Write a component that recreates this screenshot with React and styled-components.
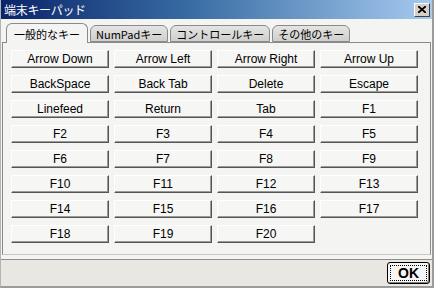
import React from 'react';
import styled, { createGlobalStyle } from 'styled-components';

const GlobalStyle = createGlobalStyle`
  html, body {
    margin: 0;
    padding: 0;
    background: #ffffff;
  }
  body {
    font-family: "Liberation Sans", Arial, sans-serif;
  }
`;

const Window = styled.div`
  width: 434px;
  height: 288px;
  box-sizing: border-box;
  display: flex;
  flex-direction: column;
  background: #e9e7e2;
  border-left: 1px solid #b4b4b4;
  border-right: 2px solid #9c9c9c;
  border-bottom: 2px solid #9c9c9c;
  overflow: hidden;
`;

const TitleBar = styled.div`
  height: 19px;
  flex: none;
  display: flex;
  align-items: center;
  justify-content: space-between;
  padding: 0 2px 0 3px;
  background: linear-gradient(to right, #0a246a 0%, #3a6ea5 45%, #a6caf0 100%);
`;

const Title = styled.span`
  color: #ffffff;
  font-family: "Noto Sans CJK JP", sans-serif;
  font-size: 12px;
  line-height: 19px;
  letter-spacing: -0.3px;
`;

const CloseButton = styled.div`
  width: 16px;
  height: 14px;
  box-sizing: border-box;
  display: flex;
  align-items: center;
  justify-content: center;
  background: #d4d0c8;
  border: 1px solid;
  border-color: #ffffff #404040 #404040 #ffffff;
`;

const Body = styled.div`
  flex: 1;
  display: flex;
  flex-direction: column;
  background: #f4f4f2;
  padding: 4px 0 4px 0;
`;

const TabStrip = styled.div`
  display: flex;
  align-items: flex-end;
  height: 19px;
  padding-left: 5px;
  position: relative;
  z-index: 1;
`;

const Tab = styled.div`
  box-sizing: border-box;
  height: ${p => (p.$active ? '20px' : '17px')};
  margin-bottom: ${p => (p.$active ? '-1px' : '0')};
  padding: 0 ${p => (p.$active ? '7px' : '5px')};
  margin-right: 2px;
  display: flex;
  align-items: center;
  border: 1px solid #8a8a8a;
  border-bottom: ${p => (p.$active ? 'none' : '1px solid #8a8a8a')};
  border-radius: 6px 6px 0 0;
  background: ${p => (p.$active ? '#f4f4f2' : 'linear-gradient(#e4e4e2, #cfcfcd)')};
  font-family: "Noto Sans CJK JP", "Liberation Sans", sans-serif;
  font-size: 11px;
  color: #000000;
  white-space: nowrap;
`;

const Panel = styled.div`
  flex: 1;
  margin: 0 1px 0 1px;
  border: 1px solid #8a8a8a;
  border-bottom-color: #c8c8c8;
  background: #f4f4f2;
  padding: 7px 12px 0 8px;
`;

const KeyGrid = styled.div`
  display: grid;
  grid-template-columns: repeat(4, 1fr);
  column-gap: 5px;
  row-gap: 7px;
`;

const KeyButton = styled.div`
  height: 18px;
  box-sizing: border-box;
  display: flex;
  align-items: center;
  justify-content: center;
  background: #f6f6f4;
  border: 1px solid;
  border-color: #ffffff #555555 #555555 #ffffff;
  box-shadow: inset -1px -1px 0 #9a9a9a;
  font-size: 12px;
  color: #000000;
  white-space: nowrap;
`;

const Footer = styled.div`
  height: 26px;
  flex: none;
  display: flex;
  align-items: center;
  justify-content: flex-end;
  padding-right: 2px;
  border-top: 1px solid #8c8c8c;
  background: #e9e7e2;
`;

const OkButton = styled.div`
  width: 43px;
  height: 22px;
  box-sizing: border-box;
  display: flex;
  align-items: center;
  justify-content: center;
  border: 1px solid #000000;
  border-radius: 3px;
  background: #f6f6f4;
  box-shadow: inset -1px -1px 0 #808080;
  padding: 2px;
`;

const OkFocus = styled.div`
  flex: 1;
  align-self: stretch;
  display: flex;
  align-items: center;
  justify-content: center;
  border: 1px dotted #000000;
  font-family: "Liberation Sans", Arial, sans-serif;
  font-weight: bold;
  font-size: 14px;
`;

const tabs = ['一般的なキー', 'NumPadキー', 'コントロールキー', 'その他のキー'];

const keys = [
  'Arrow Down', 'Arrow Left', 'Arrow Right', 'Arrow Up',
  'BackSpace', 'Back Tab', 'Delete', 'Escape',
  'Linefeed', 'Return', 'Tab', 'F1',
  'F2', 'F3', 'F4', 'F5',
  'F6', 'F7', 'F8', 'F9',
  'F10', 'F11', 'F12', 'F13',
  'F14', 'F15', 'F16', 'F17',
  'F18', 'F19', 'F20',
];

export default function App() {
  return (
    <>
      <GlobalStyle />
      <Window>
        <TitleBar>
          <Title>端末キーパッド</Title>
          <CloseButton>
            <svg width="8" height="7" viewBox="0 0 8 7">
              <path d="M0 0 L8 7 M8 0 L0 7" stroke="#000" strokeWidth="1.8" />
            </svg>
          </CloseButton>
        </TitleBar>
        <Body>
          <TabStrip>
            {tabs.map((t, i) => (
              <Tab key={t} $active={i === 0}>{t}</Tab>
            ))}
          </TabStrip>
          <Panel>
            <KeyGrid>
              {keys.map(k => (
                <KeyButton key={k}>{k}</KeyButton>
              ))}
            </KeyGrid>
          </Panel>
        </Body>
        <Footer>
          <OkButton>
            <OkFocus>OK</OkFocus>
          </OkButton>
        </Footer>
      </Window>
    </>
  );
}
